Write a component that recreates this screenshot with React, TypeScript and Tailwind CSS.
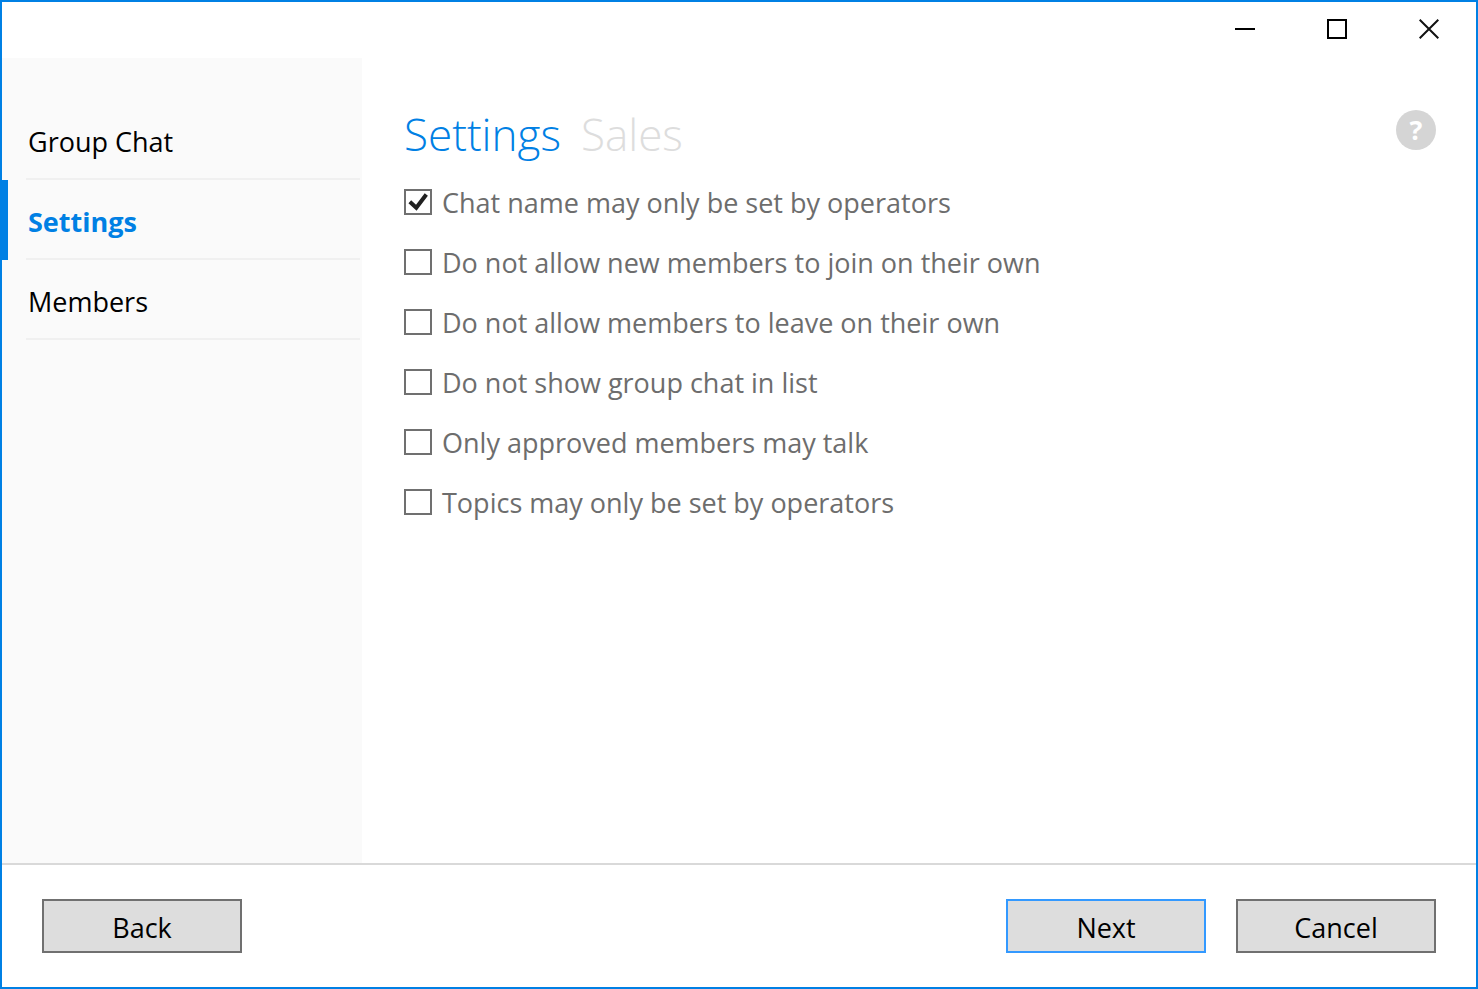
import { useState } from 'react';

const pages = ['Group Chat', 'Settings', 'Members'];

const initialOptions = [
  { id: 'name', label: 'Chat name may only be set by operators', checked: true },
  { id: 'join', label: 'Do not allow new members to join on their own', checked: false },
  { id: 'leave', label: 'Do not allow members to leave on their own', checked: false },
  { id: 'hidden', label: 'Do not show group chat in list', checked: false },
  { id: 'approved', label: 'Only approved members may talk', checked: false },
  { id: 'topics', label: 'Topics may only be set by operators', checked: false },
];

function TitleBar() {
  const buttonClass = 'flex h-[54px] w-[92px] items-center justify-center hover:bg-gray-200';

  return (
    <header className="flex h-14 shrink-0 justify-end pr-px">
      <button type="button" aria-label="Minimize" className={buttonClass}>
        <svg width="20" height="20" viewBox="0 0 20 20">
          <path d="M0 10H20" stroke="#000" strokeWidth="2" />
        </svg>
      </button>
      <button type="button" aria-label="Maximize" className={buttonClass}>
        <svg width="20" height="20" viewBox="0 0 20 20">
          <rect x="1" y="1" width="18" height="18" fill="none" stroke="#000" strokeWidth="2" />
        </svg>
      </button>
      <button type="button" aria-label="Close" className={buttonClass}>
        <svg width="20" height="20" viewBox="0 0 20 20">
          <path d="M0.7 0.7L19.3 19.3M19.3 0.7L0.7 19.3" stroke="#111" strokeWidth="2" />
        </svg>
      </button>
    </header>
  );
}

export default function App() {
  const [page, setPage] = useState('Settings');
  const [options, setOptions] = useState(initialOptions);

  const toggle = (id: string) => {
    setOptions(options.map((o) => (o.id === id ? { ...o, checked: !o.checked } : o)));
  };

  return (
    <div className="flex min-h-screen flex-col border-2 border-[#0080e4] bg-white font-['Open_Sans','Noto_Sans',sans-serif] text-[27px] leading-10 text-black">
      <TitleBar />

      <div className="flex flex-1">
        <nav className="w-[360px] shrink-0 bg-[#fafafa] pt-[42px]">
          {pages.map((name) => (
            <button
              key={name}
              type="button"
              onClick={() => setPage(name)}
              className={
                name === page
                  ? 'flex h-20 w-full border-l-6 border-[#0080e4] pr-0.5 pl-[18px] font-bold text-[#0080e4]'
                  : 'flex h-20 w-full pr-0.5 pl-6'
              }
            >
              <span className="flex h-full flex-1 items-center border-b-2 border-[#f0f0f0] pt-1.5 pl-0.5">
                {name}
              </span>
            </button>
          ))}
        </nav>

        <main className="flex-1 pt-11 pr-10 pl-[42px]">
          <div className="flex items-start justify-between">
            <h1 className="flex gap-5 text-[44px] leading-[64px] font-light">
              <span className="text-[#0080e4]">Settings</span>
              <span className="text-[#dddddd]">Sales</span>
            </h1>
            <button
              type="button"
              aria-label="Help"
              className="mt-2 flex size-10 items-center justify-center rounded-full bg-[#d5d5d5] font-bold text-white"
            >
              ?
            </button>
          </div>

          <div className="mt-2 flex flex-col text-[#6d6d6d]">
            {options.map((option) => (
              <label key={option.id} className="flex h-[60px] items-center gap-2.5 pb-1">
                <span className="grid shrink-0">
                  <input
                    type="checkbox"
                    checked={option.checked}
                    onChange={() => toggle(option.id)}
                    className="col-start-1 row-start-1 h-[26px] w-7 appearance-none border-2 border-[#707070] bg-white"
                  />
                  {option.checked && (
                    <svg
                      width="28"
                      height="26"
                      viewBox="0 0 28 26"
                      className="pointer-events-none col-start-1 row-start-1"
                    >
                      <path d="M5.8 12.8L12.3 18.8L22.3 5.5" fill="none" stroke="#212121" strokeWidth="4" />
                    </svg>
                  )}
                </span>
                <span className="pt-0.5">{option.label}</span>
              </label>
            ))}
          </div>
        </main>
      </div>

      <footer className="flex shrink-0 gap-[30px] border-t-2 border-[#d9d9d9] px-10 py-[34px]">
        <button type="button" className="mr-auto h-[54px] w-[200px] border-2 border-[#707070] bg-[#dddddd] pt-1">
          Back
        </button>
        <button type="button" className="h-[54px] w-[200px] border-2 border-[#3399ff] bg-[#dddddd] pt-1">
          Next
        </button>
        <button type="button" className="h-[54px] w-[200px] border-2 border-[#707070] bg-[#dddddd] pt-1">
          Cancel
        </button>
      </footer>
    </div>
  );
}
